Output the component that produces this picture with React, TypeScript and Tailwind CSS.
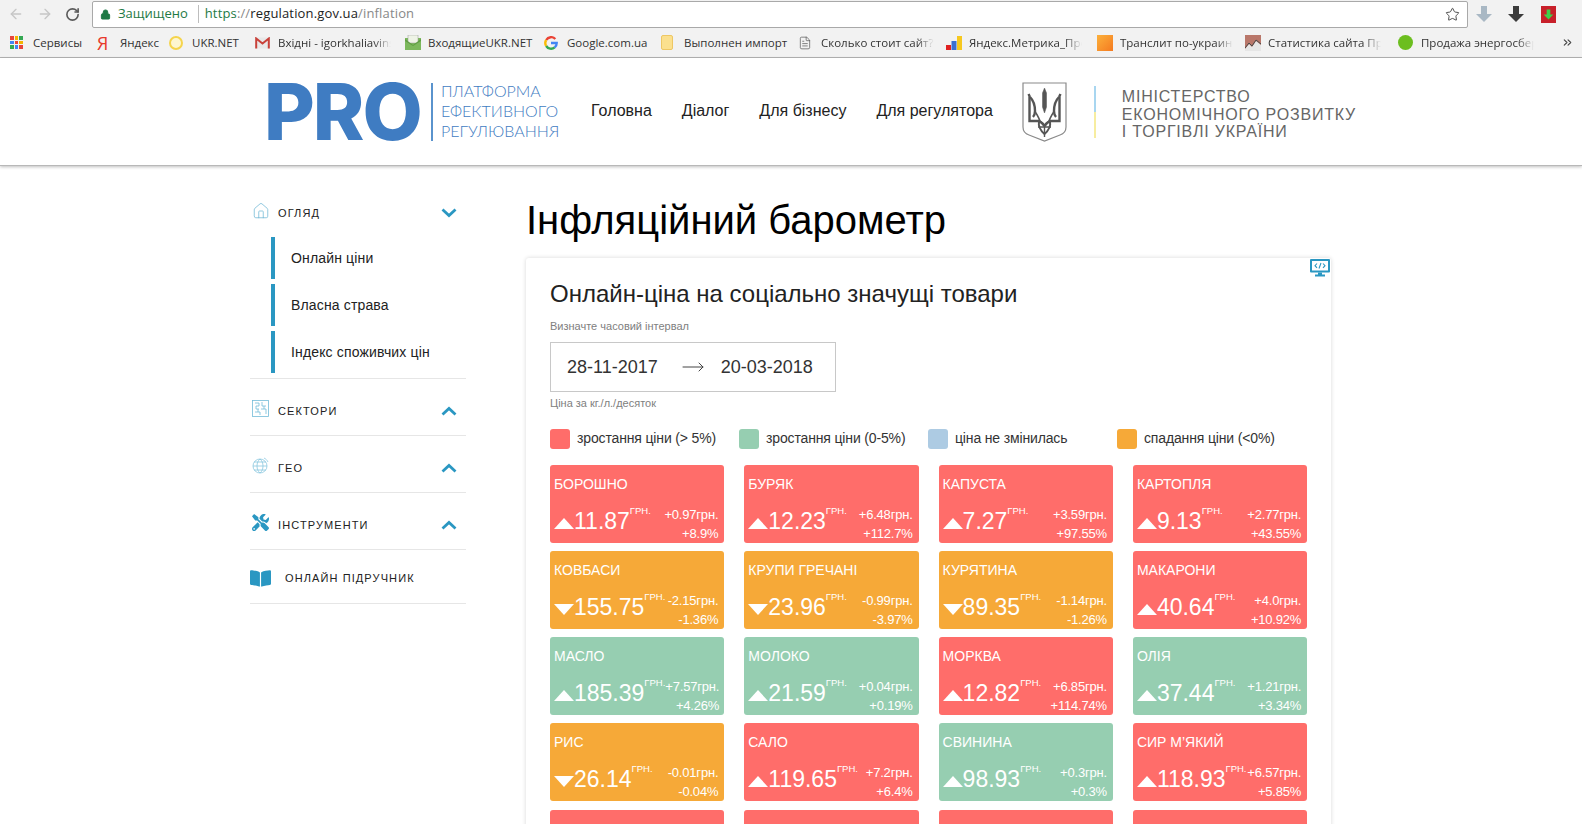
import React from "react";
import { ArrowLeft, ArrowRight, RotateCw, Lock, Star, FileText, Home, ChevronsRight, MoveRight } from "lucide-react";
import { FaBookOpen, FaTools } from "react-icons/fa";

type Tile = {
  name: string;
  price: string;
  diff: string;
  pct: string;
  tone: "red" | "green" | "orange";
};

const tones = {
  red: "bg-[#ff6d6a]",
  green: "bg-[#96ceb1]",
  orange: "bg-[#f6a938]",
};

const tiles: Tile[] = [
  { name: "Борошно", price: "11.87", diff: "+0.97грн.", pct: "+8.9%", tone: "red" },
  { name: "Буряк", price: "12.23", diff: "+6.48грн.", pct: "+112.7%", tone: "red" },
  { name: "Капуста", price: "7.27", diff: "+3.59грн.", pct: "+97.55%", tone: "red" },
  { name: "Картопля", price: "9.13", diff: "+2.77грн.", pct: "+43.55%", tone: "red" },
  { name: "Ковбаси", price: "155.75", diff: "-2.15грн.", pct: "-1.36%", tone: "orange" },
  { name: "Крупи гречані", price: "23.96", diff: "-0.99грн.", pct: "-3.97%", tone: "orange" },
  { name: "Курятина", price: "89.35", diff: "-1.14грн.", pct: "-1.26%", tone: "orange" },
  { name: "Макарони", price: "40.64", diff: "+4.0грн.", pct: "+10.92%", tone: "red" },
  { name: "Масло", price: "185.39", diff: "+7.57грн.", pct: "+4.26%", tone: "green" },
  { name: "Молоко", price: "21.59", diff: "+0.04грн.", pct: "+0.19%", tone: "green" },
  { name: "Морква", price: "12.82", diff: "+6.85грн.", pct: "+114.74%", tone: "red" },
  { name: "Олія", price: "37.44", diff: "+1.21грн.", pct: "+3.34%", tone: "green" },
  { name: "Рис", price: "26.14", diff: "-0.01грн.", pct: "-0.04%", tone: "orange" },
  { name: "Сало", price: "119.65", diff: "+7.2грн.", pct: "+6.4%", tone: "red" },
  { name: "Свинина", price: "98.93", diff: "+0.3грн.", pct: "+0.3%", tone: "green" },
  { name: "Сир м’який", price: "118.93", diff: "+6.57грн.", pct: "+5.85%", tone: "red" },
  { name: "", price: "", diff: "", pct: "", tone: "red" },
  { name: "", price: "", diff: "", pct: "", tone: "red" },
  { name: "", price: "", diff: "", pct: "", tone: "red" },
  { name: "", price: "", diff: "", pct: "", tone: "red" },
];

const legend = [
  { label: "зростання ціни (> 5%)", color: "bg-[#ff6d6a]" },
  { label: "зростання ціни (0-5%)", color: "bg-[#96ceb1]" },
  { label: "ціна не змінилась", color: "bg-[#adcbe3]" },
  { label: "спадання ціни (<0%)", color: "bg-[#f6a938]" },
];

const bookmarks = [
  { label: "Сервисы", w: "w-[87px]", icon: <AppsIcon /> },
  { label: "Яндекс", w: "w-[72px]", icon: <span className="w-[13px] text-[18px] font-medium leading-none text-[#e8392b]">Я</span> },
  { label: "UKR.NET", w: "w-[86px]", icon: <span className="h-[14px] w-[14px] rounded-full border-2 border-[#f5d44c] bg-[#fdf6d0]" /> },
  { label: "Вхідні - igorkhaliavins", w: "w-[150px]", fade: true, icon: <GmailIcon /> },
  { label: "ВходящиеUKR.NET", w: "w-[139px]", icon: <MailIcon /> },
  { label: "Google.com.ua", w: "w-[117px]", icon: <GoogleIcon /> },
  { label: "Выполнен импорт", w: "w-[137px]", icon: <span className="h-[15px] w-[12px] rounded-[2px] border border-[#eec764] bg-[#fbe08e]" /> },
  { label: "Сколько стоит сайт?", w: "w-[148px]", fade: true, icon: <FileText size={14} strokeWidth={1.2} className="text-[#555]" /> },
  { label: "Яндекс.Метрика_Про", w: "w-[151px]", fade: true, icon: <BarsIcon /> },
  { label: "Транслит по-украинс", w: "w-[148px]", fade: true, icon: <span className="h-[16px] w-[16px] bg-gradient-to-br from-[#fbb03b] to-[#f47a20]" /> },
  { label: "Статистика сайта Про", w: "w-[153px]", fade: true, icon: <StatIcon /> },
  { label: "Продажа энергосбер", w: "w-[160px]", fade: true, icon: <span className="h-[15px] w-[15px] rounded-full bg-[#6cbe1f]" /> },
];

function AppsIcon() {
  const colors = ["#e8453c", "#f4b400", "#34a853", "#4285f4", "#e8453c", "#f4b400", "#34a853", "#4285f4", "#e8453c"];
  return (
    <span className="grid h-[13px] w-[13px] grid-cols-3 gap-[1px]">
      {colors.map((c, i) => (
        <span key={i} style={{ backgroundColor: c }} />
      ))}
    </span>
  );
}

function GmailIcon() {
  return (
    <svg width="15" height="12" viewBox="0 0 15 12">
      <rect x="0" y="0.500" width="15" height="11" fill="#e8e8e8" />
      <path d="M1.200 11.500V1.500l6.300 5 6.300-5v10" fill="none" stroke="#c9413a" strokeWidth="2" />
    </svg>
  );
}

function GoogleIcon() {
  return (
    <svg width="14" height="14" viewBox="0 0 14 14" fill="none" strokeWidth="2.400">
      <path d="M11.300 3A5.700 5.700 0 0 0 2.200 4" stroke="#ea4335" />
      <path d="M2.200 4a5.700 5.700 0 0 0 0 6" stroke="#fbbc05" />
      <path d="M2.200 10a5.700 5.700 0 0 0 8.500 1.400" stroke="#34a853" />
      <path d="M10.700 11.400A5.700 5.700 0 0 0 12.700 7H7" stroke="#4285f4" />
    </svg>
  );
}

function MailIcon() {
  return (
    <svg width="16" height="16" viewBox="0 0 16 16">
      <rect x="0" y="3" width="16" height="12" fill="#7cb85c" />
      <rect x="3" y="0" width="10" height="8" fill="#eef3e6" stroke="#999" strokeWidth="0.5" />
      <path d="M0 4l8 6 8-6v2l-8 5-8-5z" fill="#5f9e42" />
    </svg>
  );
}

function BarsIcon() {
  return (
    <svg width="16" height="16" viewBox="0 0 16 16">
      <rect x="0" y="10" width="5" height="5" fill="#e02020" />
      <rect x="5.5" y="6" width="5" height="9" fill="#3a6fd0" />
      <rect x="11" y="1" width="5" height="14" fill="#f6c81f" />
    </svg>
  );
}

function StatIcon() {
  return (
    <svg width="16" height="16" viewBox="0 0 16 16">
      <rect width="16" height="16" fill="#b9776a" />
      <path d="M0 14l4-5 3 3 4-6 5 4v6H0z" fill="#e6e6e6" />
      <path d="M0 13l4-5 3 3 4-6 5 4" fill="none" stroke="#4a4a4a" strokeWidth="1" />
    </svg>
  );
}

function BlockArrow({ color, size = 18 }: { color: string; size?: number }) {
  return (
    <svg width={size} height={size} viewBox="0 0 18 18" className="shrink-0">
      <path d="M6 1h6v8h5l-8 8-8-8h5z" fill={color} />
    </svg>
  );
}

function CoatOfArms() {
  return (
    <svg width="45" height="60" viewBox="0 0 45 60" className="shrink-0">
      <path d="M1 1h43v44q0 6-6 8l-15.500 6-15.500-6q-6-2-6-8z" fill="#fff" stroke="#8a8a8a" strokeWidth="1.200" />
      <g fill="none" stroke="#555" strokeWidth="2.400">
        <path d="M22.500 6l2 5v14l-2 6-2-6V11z" fill="#555" strokeWidth="0.500" />
        <path d="M6.500 12l1 2v25h8c3 0 5 2 7 5M38.500 12l-1 2v25h-8c-3 0-5 2-7 5" />
        <path d="M8 15c3 3 5 8 5 14 0 3-1 5-2 6M37 15c-3 3-5 8-5 14 0 3 1 5 2 6" />
        <path d="M13 29c2 4 4 7 5 10M32 29c-2 4-4 7-5 10" strokeWidth="1.600" />
        <path d="M17 39c-1 6 2 10 5.500 13 3.500-3 6.500-7 5.500-13-2 1-4 3-5.500 5-1.500-2-3.500-4-5.500-5z" strokeWidth="2" />
        <path d="M22.500 44v11M16 45h13" strokeWidth="1.400" />
      </g>
    </svg>
  );
}

function Chevron({ up }: { up?: boolean }) {
  return (
    <svg width="16" height="10" viewBox="0 0 16 10" className="shrink-0">
      <path d={up ? "M1.500 8.500L8 2.500l6.500 6" : "M1.500 1.500L8 7.500l6.500-6"} fill="none" stroke="#2a97c2" strokeWidth="2.800" />
    </svg>
  );
}

function SectorsIcon() {
  return (
    <svg width="17" height="17" viewBox="0 0 17 17" fill="none" stroke="#74bcd9" strokeWidth="0.800">
      <rect x="0.500" y="0.500" width="16" height="16" />
      <path d="M3 3h4v3H4v3h3M10 2v4h4M9 9h5v5M3 12h5v3M12 6v3M6 9v3" />
    </svg>
  );
}

function GeoIcon() {
  return (
    <svg width="17" height="17" viewBox="0 0 17 17" fill="none" stroke="#8cc8e0" strokeWidth="0.800">
      <circle cx="8" cy="9" r="7" />
      <path d="M1 9h14M8 2c-4 3-4 11 0 14M8 2c4 3 4 11 0 14M2 5h12M2 13h12" />
      <path d="M12 1c2 1 3 2 4 4" />
    </svg>
  );
}

function EmbedIcon() {
  return (
    <svg width="20" height="18" viewBox="0 0 20 18">
      <rect x="0" y="0" width="20" height="13.500" rx="1" fill="#2a97c2" />
      <rect x="2" y="2" width="16" height="9.500" fill="#fff" />
      <path d="M7 4.500L5 6.700l2 2.200M13 4.500l2 2.200-2 2.200M11 4l-2 5.500" fill="none" stroke="#2a97c2" strokeWidth="1.100" />
      <rect x="8" y="13.500" width="4" height="2.500" fill="#2a97c2" />
      <rect x="5" y="15.500" width="10" height="2" fill="#2a97c2" />
    </svg>
  );
}

function BrowserBar() {
  return (
    <div className="h-[58px] bg-[#f2f2f2] border-b border-[#b5b5b5] font-['Open_Sans',sans-serif] overflow-hidden">
      <div className="flex h-[28px] items-center">
        <div className="flex w-[92px] shrink-0 items-center pl-[8px] gap-[12.500px]">
          <ArrowLeft size={16} className="text-[#c6c6c6]" />
          <ArrowRight size={16} className="text-[#c6c6c6]" />
          <RotateCw size={15} strokeWidth={2.600} className="text-[#5a5a5a]" />
        </div>
        <div className="flex h-[27px] w-[1376px] shrink-0 items-center rounded-[2px] border border-[#a9a9a9] bg-white pl-[7px] pr-[7px] text-[13px]">
          <Lock size={11} fill="#1e7a45" className="text-[#1e7a45]" />
          <span className="ml-[7px] text-[#1e7a45]">Защищено</span>
          <span className="ml-[10px] h-[18px] w-px bg-[#bdbdbd]" />
          <span className="ml-[6px] tracking-[0.15px] text-[#1e7a45]">https</span>
          <span className="tracking-[0.15px] text-[#888]">://</span>
          <span className="tracking-[0.15px] text-[#222]">regulation.gov.ua</span>
          <span className="tracking-[0.15px] text-[#888]">/inflation</span>
          <Star size={15} strokeWidth={1.500} className="ml-auto text-[#444]" />
        </div>
        <div className="flex flex-1 items-center pl-[7px] gap-[14px]">
          <BlockArrow color="#a9b8c4" />
          <BlockArrow color="#3c3c3c" />
          <span className="ml-[2px] flex h-[17px] w-[15px] items-center justify-center bg-[#c8202a]">
            <BlockArrow color="#3fd04a" size={11} />
          </span>
        </div>
      </div>
      <div className="flex h-[29px] items-center pl-[10px] text-[11.500px] text-[#333]">
        {bookmarks.map((b) => (
          <div key={b.label} className={`${b.w} flex shrink-0 items-center`}>
            <span className="flex w-[23px] shrink-0 items-center">{b.icon}</span>
            {b.fade ? (
              <span className="w-[113px] overflow-hidden whitespace-nowrap [mask-image:linear-gradient(to_right,#000_85%,transparent)]">{b.label}</span>
            ) : (
              <span className="whitespace-nowrap">{b.label}</span>
            )}
          </div>
        ))}
        <ChevronsRight size={13} className="ml-[3px] text-[#444]" />
      </div>
    </div>
  );
}

function Header() {
  return (
    <header className="relative z-10 flex h-[108px] items-center border-b border-[#b8b8b8] bg-white pl-[264px] shadow-[0_1px_3px_rgba(0,0,0,0.25)]">
      <span className="w-[154px] shrink-0 text-[78px] font-extrabold leading-none tracking-[-2px] text-[#3f7cc2] font-['Inter',sans-serif]">
        PRO
      </span>
      <span className="ml-[13px] h-[58px] w-[2px] bg-[#5a93cd]" />
      <div className="ml-[8px] w-[138px] pb-[2px] text-[16px] font-light leading-[20px] text-[#3f7cc2] font-['Lato',sans-serif]">
        <div>ПЛАТФОРМА</div>
        <div>ЕФЕКТИВНОГО</div>
        <div>РЕГУЛЮВАННЯ</div>
      </div>
      <nav className="ml-[12px] flex gap-[30px] pb-[2px] text-[16px] text-[#222] font-['Liberation_Sans',sans-serif]">
        <span>Головна</span>
        <span>Діалог</span>
        <span>Для бізнесу</span>
        <span>Для регулятора</span>
      </nav>
      <div className="ml-[29px]">
        <CoatOfArms />
      </div>
      <span className="ml-[27px] h-[52px] w-[2px] bg-gradient-to-b from-[#a8d6f0] from-50% to-[#f7eda0] to-50%" />
      <div className="ml-[26px] pt-[6px] text-[16px] leading-[17.500px] tracking-[0.800px] text-[#666] font-['Liberation_Sans',sans-serif]">
        <div>МІНІСТЕРСТВО</div>
        <div>ЕКОНОМІЧНОГО РОЗВИТКУ</div>
        <div>І ТОРГІВЛІ УКРАЇНИ</div>
      </div>
    </header>
  );
}

function SideRow({ icon, label, up }: { icon: React.ReactNode; label: string; up?: boolean }) {
  return (
    <div className="flex h-[57px] items-center pt-[8px] pr-[9px] border-b border-[#e6e6e6]">
      <span className="flex w-[28px] shrink-0 -translate-y-[3px] items-center pl-[2px]">{icon}</span>
      <span className="text-[11px] tracking-[1.100px] text-[#222]">{label}</span>
      <span className="ml-auto">
        <Chevron up={up} />
      </span>
    </div>
  );
}

function Sidebar() {
  return (
    <aside className="ml-[250px] w-[216px] shrink-0 pt-[19px] font-['Liberation_Sans',sans-serif]">
      <div className="border-b border-[#e6e6e6] pb-[5px]">
        <div className="flex h-[52px] items-start pt-[19px] pr-[9px]">
          <span className="w-[28px] shrink-0 pl-[2px]">
            <Home size={18} strokeWidth={1} className="-translate-y-[2px] text-[#6db7d4]" />
          </span>
          <span className="text-[11px] leading-[18px] tracking-[1.100px] text-[#222]">ОГЛЯД</span>
          <span className="ml-auto pt-[4px]">
            <Chevron />
          </span>
        </div>
        <div className="flex flex-col gap-[5px] pl-[21px]">
          {["Онлайн ціни", "Власна страва", "Індекс споживчих цін"].map((s) => (
            <div key={s} className="flex h-[42px] items-center border-l-4 border-[#2a97c2] pl-[16px] text-[14px] tracking-[0.15px] text-[#222]">
              {s}
            </div>
          ))}
        </div>
      </div>
      <SideRow icon={<SectorsIcon />} label="СЕКТОРИ" up />
      <SideRow icon={<GeoIcon />} label="ГЕО" up />
      <SideRow icon={<FaTools size={17} className="text-[#2a97c2]" />} label="ІНСТРУМЕНТИ" up />
      <div className="flex h-[54px] items-center pt-[3px] border-b border-[#e6e6e6]">
        <FaBookOpen size={21} className="text-[#2a97c2]" />
        <span className="ml-[14px] text-[11px] tracking-[1.100px] text-[#222]">ОНЛАЙН ПІДРУЧНИК</span>
      </div>
    </aside>
  );
}

function PriceTile({ tile }: { tile: Tile }) {
  const down = tile.tone === "orange";
  return (
    <div className={`${tones[tile.tone]} flex h-[78px] flex-col rounded-[3px] pl-[4px] pr-[6px] pt-[10px] text-white`}>
      <div className="mb-[1px] text-[14px] uppercase leading-[18px]">{tile.name}</div>
      {tile.price && (
        <div className="flex items-start justify-between">
          <div className="flex h-[41px] items-end">
            <span className={`mb-[6px] h-0 w-0 border-x-[10px] border-x-transparent ${down ? "border-t-[11px] border-t-white" : "border-b-[11px] border-b-white"}`} />
            <span className="text-[23px] leading-[28px]">{tile.price}</span>
            <span className="self-start mt-[11px] text-[9.500px] leading-[12px]">ГРН.</span>
          </div>
          <div className="mt-[11px] text-right text-[13px] leading-[19px] tracking-[-0.200px]">
            <div>{tile.diff}</div>
            <div>{tile.pct}</div>
          </div>
        </div>
      )}
    </div>
  );
}

function Barometer() {
  return (
    <main className="ml-[60px] w-[805px] shrink-0 font-['Liberation_Sans',sans-serif]">
      <h1 className="pt-[31px] text-[40px] leading-[46px] text-black">Інфляційний барометр</h1>
      <section className="relative mt-[15px] h-[600px] rounded-[3px] bg-white px-[24px] pt-[22px] shadow-[0_0_4px_rgba(0,0,0,0.16)]">
        <span className="absolute right-[1px] top-[1px]">
          <EmbedIcon />
        </span>
        <h2 className="text-[24px] leading-[28px] text-[#222]">Онлайн-ціна на соціально значущі товари</h2>
        <div className="mt-[11px] text-[11px] leading-[14px] text-[#808080]">Визначте часовий інтервал</div>
        <div className="mt-[9px] flex h-[50px] w-[286px] items-center border border-[#c8c8c8] pl-[16px] text-[18px] text-[#333]">
          <span>28-11-2017</span>
          <MoveRight size={24} strokeWidth={1} className="ml-[23px] text-[#444]" />
          <span className="ml-[16px]">20-03-2018</span>
        </div>
        <div className="mt-[4px] text-[11px] leading-[14px] text-[#808080]">Ціна за кг./л./десяток</div>
        <div className="mt-[18px] grid grid-cols-[189px_189px_189px_189px]">
          {legend.map((l) => (
            <div key={l.label} className="flex items-center gap-[7px]">
              <span className={`${l.color} h-[20px] w-[20px] rounded-[3px]`} />
              <span className="text-[14px] tracking-[-0.15px] text-[#333]">{l.label}</span>
            </div>
          ))}
        </div>
        <div className="mt-[15.700px] grid grid-cols-[174.300px_174.300px_174.300px_174.300px] gap-x-[20px] gap-y-[8.250px]">
          {tiles.map((t, i) => (
            <PriceTile key={i} tile={t} />
          ))}
        </div>
      </section>
    </main>
  );
}

export default function App() {
  return (
    <div className="h-[824px] w-[1582px] overflow-hidden bg-white">
      <BrowserBar />
      <Header />
      <div className="flex">
        <Sidebar />
        <Barometer />
      </div>
    </div>
  );
}
